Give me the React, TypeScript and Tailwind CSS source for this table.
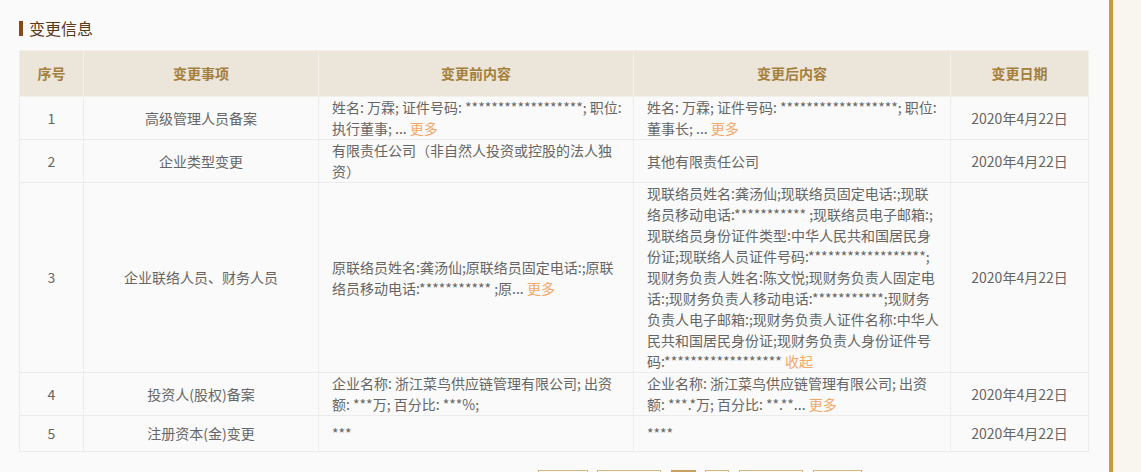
import React from 'react';

type Row = {
  no: number;
  item: string;
  before: React.ReactNode;
  after: React.ReactNode;
  date: string;
  h?: string;
};

const More = ({ label = '更多' }: { label?: string }) => (
  <span className="cursor-pointer text-[#f3a867]"> {label}</span>
);

// lines are broken where the original page breaks them
const lines = (ls: React.ReactNode[]) =>
  ls.map((l, i) => (
    <React.Fragment key={i}>
      {i > 0 && <br />}
      {l}
    </React.Fragment>
  ));

const rows: Row[] = [
  {
    no: 1,
    item: '高级管理人员备案',
    before: lines([
      '姓名: 万霖; 证件号码: ******************; 职位:',
      <>
        执行董事; ...
        <More />
      </>,
    ]),
    after: lines([
      '姓名: 万霖; 证件号码: ******************; 职位:',
      <>
        董事长; ...
        <More />
      </>,
    ]),
    date: '2020年4月22日',
    h: 'h-[43px]',
  },
  {
    no: 2,
    item: '企业类型变更',
    before: lines(['有限责任公司（非自然人投资或控股的法人独', '资）']),
    after: '其他有限责任公司',
    date: '2020年4月22日',
    h: 'h-[43px]',
  },
  {
    no: 3,
    item: '企业联络人员、财务人员',
    before: lines([
      '原联络员姓名:龚汤仙;原联络员固定电话:;原联',
      <>
        络员移动电话:*********** ;原...
        <More />
      </>,
    ]),
    after: lines([
      '现联络员姓名:龚汤仙;现联络员固定电话:;现联',
      '络员移动电话:*********** ;现联络员电子邮箱:;',
      '现联络员身份证件类型:中华人民共和国居民身',
      '份证;现联络人员证件号码:******************;',
      '现财务负责人姓名:陈文悦;现财务负责人固定电',
      '话:;现财务负责人移动电话:***********;现财务',
      '负责人电子邮箱:;现财务负责人证件名称:中华人',
      '民共和国居民身份证;现财务负责人身份证件号',
      <>
        码:******************
        <More label="收起" />
      </>,
    ]),
    date: '2020年4月22日',
  },
  {
    no: 4,
    item: '投资人(股权)备案',
    before: lines(['企业名称: 浙江菜鸟供应链管理有限公司; 出资', '额: ***万; 百分比: ***%;']),
    after: lines([
      '企业名称: 浙江菜鸟供应链管理有限公司; 出资',
      <>
        额: ***.*万; 百分比: **.**...
        <More />
      </>,
    ]),
    date: '2020年4月22日',
    h: 'h-[43px]',
  },
  {
    no: 5,
    item: '注册资本(金)变更',
    before: '***',
    after: '****',
    date: '2020年4月22日',
    h: 'h-[36px]',
  },
];

const headers = ['序号', '变更事项', '变更前内容', '变更后内容', '变更日期'];

export default function App() {
  return (
    <div className="flex h-[472px] w-[1141px] overflow-hidden bg-[#f9f6ef] font-['Noto_Sans_CJK_SC',sans-serif]">
      <div className="w-[1109px] shrink-0 bg-[#fafafa] pl-[19px] pt-[18px]">
        {/* title */}
        <div className="mb-[12px] flex h-[20px] items-center">
          <span className="mr-[6px] h-[15px] w-[4px] bg-[#8b4a14]" />
          <span className="text-[16px] leading-[20px] text-[#5b3a1c]">变更信息</span>
        </div>

        <table className="w-[1069px] table-fixed border-collapse text-[14px] text-[#666]">
          <colgroup>
            <col className="w-[64px]" />
            <col className="w-[235px]" />
            <col className="w-[315px]" />
            <col className="w-[317px]" />
            <col className="w-[138px]" />
          </colgroup>
          <thead>
            <tr className="h-[46px] bg-[#ebe5da]">
              {headers.map((h) => (
                <th
                  key={h}
                  className="border border-[#f3f0ea] text-center text-[14px] font-bold text-[#a57f3a]"
                >
                  {h}
                </th>
              ))}
            </tr>
          </thead>
          <tbody className="bg-[#fafafa]">
            {rows.map((r) => (
              <tr key={r.no} className={r.h}>
                <td className="border border-[#ececec] text-center leading-[21px]">{r.no}</td>
                <td className="border border-[#ececec] text-center leading-[21px]">{r.item}</td>
                <td className="whitespace-nowrap border border-[#ececec] px-[13px] leading-[21px]">{r.before}</td>
                <td className="whitespace-nowrap border border-[#ececec] px-[13px] leading-[21px]">{r.after}</td>
                <td className="border border-[#ececec] text-center leading-[21px]">{r.date}</td>
              </tr>
            ))}
          </tbody>
        </table>

        {/* pagination */}
        <div className="mt-[18px] flex pl-[519px]">
          <span className="mr-[9px] h-[28px] w-[50px] border border-[#d6b77c]" />
          <span className="mr-[10px] h-[28px] w-[64px] border border-[#d6b77c]" />
          <span className="mr-[9px] h-[28px] w-[25px] border border-[#c9a063] bg-[#c9a063]" />
          <span className="mr-[10px] h-[28px] w-[24px] border border-[#d6b77c]" />
          <span className="mr-[10px] h-[28px] w-[64px] border border-[#d6b77c]" />
          <span className="h-[28px] w-[49px] border border-[#d6b77c]" />
        </div>
      </div>
      <div className="w-[4px] shrink-0 bg-[#c99a3b]" />
      <div className="flex-1 bg-[#f9f6ef]" />
    </div>
  );
}
